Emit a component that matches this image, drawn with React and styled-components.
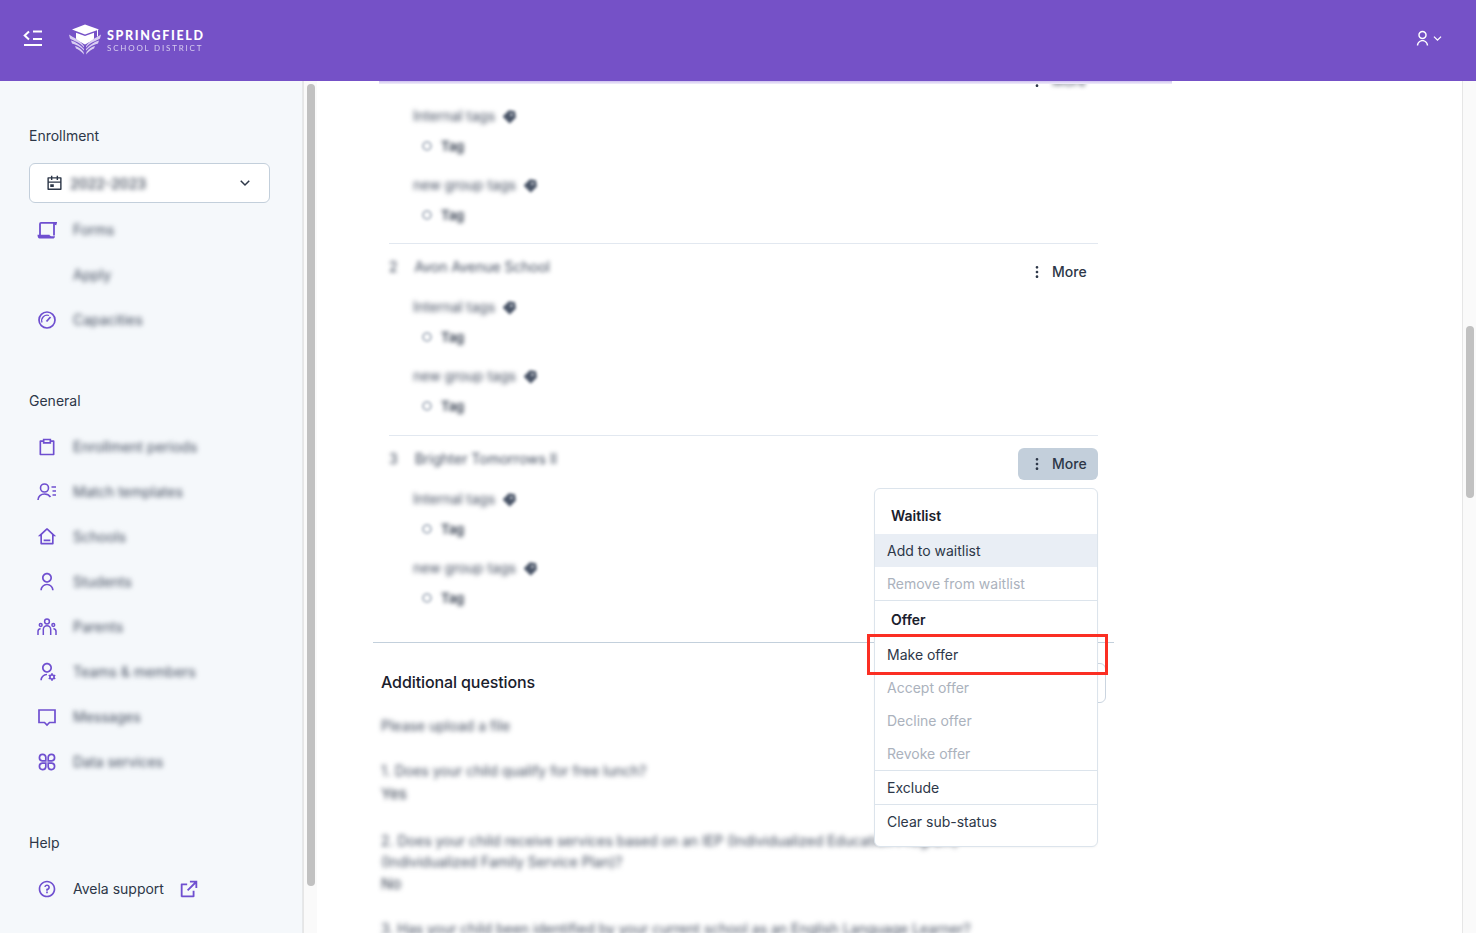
// App.jsx
import React from "react";
import styled, { createGlobalStyle } from "styled-components";
import {
  RiArrowDownSLine, RiCalendarEventLine, RiClipboardLine, RiExternalLinkLine, RiHome3Line,
  RiMore2Fill, RiPriceTag3Fill, RiQuestionLine, RiUserLine, RiUserSettingsLine,
} from "react-icons/ri";

const PURPLE = "#7551c7";
const ICON = "#6f4fd0";

// ===================== Global Styles =====================
const Global = createGlobalStyle`
  * { box-sizing: border-box; }
  html, body, #root { height: 100%; }
  body {
    margin: 0; overflow: hidden; color: #2d3748; background: #fff;
    font-family: Inter, "Liberation Sans", sans-serif; font-size: 14px;
  }
`;

// ===================== Layout =====================
const Page = styled.div`height: 100vh; display: flex; flex-direction: column;`;
const TopBar = styled.header`
  flex: 0 0 81px; position: relative; z-index: 5;
  display: flex; align-items: center; padding: 0 31px 5px 23px;
  background: ${PURPLE}; color: #fff;
`;
const Brand = styled.div`display: flex; align-items: center; gap: 6px; margin: 3px 0 0 26px;`;
const BrandText = styled.div`display: grid; gap: 2.5px; margin-top: 3px; font-family: Lato, Inter, sans-serif;`;
const BrandName = styled.span`font-size: 12.5px; line-height: 13px; font-weight: 900; letter-spacing: 1.65px;`;
const BrandSub = styled.span`font-size: 8px; line-height: 9px; letter-spacing: 1.8px; opacity: .7;`;
const UserMenu = styled.div`margin-left: auto; display: flex; align-items: center; font-size: 17px;`;
const UserChevron = styled(RiArrowDownSLine)`font-size: 15px; margin-left: -1px;`;

const Body = styled.div`flex: 1; min-height: 0; display: flex;`;
const Sidebar = styled.aside`
  flex: 0 0 303px; padding: 45px 32px 0 29px;
  background: #f5f8fb; border-right: 1px solid #e6e8ea;
`;
const SectionLabel = styled.div`
  line-height: 20px; color: #2d3748; margin-top: ${(p) => p.$top || 0}px;
`;
const SelectBox = styled.div`
  height: 40px; margin-top: 17px; display: flex; align-items: center; gap: 7px; padding: 0 15px 0 16px;
  background: #fff; border: 1px solid #c3cfdb; border-radius: 6px;
`;
const SelectChevron = styled(RiArrowDownSLine)`margin-left: auto; font-size: 18px;`;
const NavList = styled.nav`margin-top: ${(p) => p.$top}px;`;
const NavRow = styled.div`height: 45px; display: flex; align-items: center; gap: 16px; padding-left: 8px;`;
const IconSlot = styled.span`
  flex: 0 0 20px; height: 20px; display: flex; align-items: center; justify-content: center;
  font-size: 20px; color: ${ICON};
`;
const Blur = styled.span`
  filter: blur(${(p) => p.$r || 2.4}px); color: ${(p) => p.$c || "#404a5c"}; white-space: nowrap;
  font-weight: ${(p) => p.$w || 400};
`;
const SupportText = styled.span`color: #2d3748;`;
const ExternalIcon = styled.span`display: flex; font-size: 22px; color: ${ICON}; margin-left: -2px;`;

const Track = styled.div`
  flex: 0 0 14px; padding: ${(p) => p.$top}px 2px 0 3px; background: #fafafa;
  border-left: 1px solid #e6e6e6;
`;
const Thumb = styled.div`height: ${(p) => p.$h}px; border-radius: 5px; background: #c1c1c1; width: 8px;`;

const Main = styled.main`flex: 1; min-width: 0; position: relative; overflow: hidden; background: #fff;`;
const TopEdge = styled.div`
  position: absolute; top: 0; left: 62px; width: 793px; height: 3px; z-index: 2;
  background: linear-gradient(#cfc2f0, #f1edfb);
`;
const Column = styled.div`margin: -16px 0 0 56px; width: 741px;`;
const RowList = styled.div`margin-left: 16px; width: 709px;`;
const Row = styled.section`
  padding-top: ${(p) => (p.$first ? 0 : 12)}px;
  padding-bottom: ${(p) => (p.$last ? 34 : p.$first ? 18 : 19)}px;
  border-bottom: ${(p) => (p.$last ? "none" : "1px solid #e2e8f0")};
`;
const RowHead = styled.div`display: flex; justify-content: space-between; align-items: flex-start; height: 32px;`;
const RowTitle = styled.div`display: flex; gap: 17px; line-height: 22px; color: #4a5568;`;
const MoreWrap = styled.div`position: relative; width: 80px;`;
const MoreButton = styled.div`
  height: 32px; display: flex; align-items: center; gap: 7px; padding: 0 0 1px 11px; border-radius: 6px;
  font-weight: 500; color: #2d3748; font-size: 14px;
  background: ${(p) => (p.$active ? "#c3cfdb" : "transparent")};
`;
const MoreIcon = styled.span`display: flex; font-size: 16px;`;
const TagLabel = styled.div`
  height: 20px; line-height: 20px; margin: ${(p) => p.$top}px 0 0 24px; display: flex; align-items: center; gap: 7px;
`;
const TagGlyph = styled.span`display: flex; font-size: 15px; color: #4a5568; filter: blur(1.6px);`;
const TagLine = styled.div`
  height: 20px; margin: 10px 0 0 33px; display: flex; align-items: center; gap: 9px;
`;
const TagDot = styled.span`
  width: 10px; height: 10px; border-radius: 50%; border: 2px solid #b0b8c4; filter: blur(1.5px);
`;
const TagText = styled(Blur)`font-size: 13px;`;
const Divider = styled.div`height: 1px; background: #c3d0dc;`;

const Questions = styled.div`padding: 0 8px;`;
const QuestionsHead = styled.div`
  margin-top: 20px; height: 40px; display: flex; justify-content: space-between; align-items: center;
`;
const Heading = styled.h2`
  margin: 0 0 2px; font-size: 16px; line-height: 24px; font-weight: 500; color: #1a202c; letter-spacing: -.1px;
`;
const GhostButton = styled.div`width: 100px; height: 40px; border: 1px solid #cbd5e0; border-radius: 6px;`;
const Question = styled.div`margin-top: ${(p) => p.$top}px; line-height: 21px;`;
const Answer = styled.div`margin-top: ${(p) => p.$top}px; line-height: 22px; font-size: 15px;`;

// ===================== Menu =====================
const Menu = styled.div`
  position: absolute; top: 40px; right: 0; width: 224px; padding: 8px 0; z-index: 3;
  background: #fff; border: 1px solid #dce4ec; border-radius: 6px;
  box-shadow: 0 1px 2px rgba(0, 0, 0, .04);
`;
const MenuHeading = styled.div`
  height: 37px; display: flex; align-items: center; padding-left: 16px;
  font-weight: 600; color: #1a202c;
`;
const MenuItem = styled.div`
  height: 33px; display: flex; align-items: center; padding-left: 12px;
  background: ${(p) => (p.$hover ? "#e9eef5" : "transparent")};
  color: ${(p) => (p.$disabled ? "#abb2bd" : "#2d3748")};
`;
const MenuRule = styled.div`height: 1px; background: #dce4ec;`;
const Highlight = styled.div`
  position: absolute; left: -8px; top: 145px; width: 241px; height: 41px;
  border: 3px solid #fb2f23;
`;

// ===================== Icons =====================
function CollapseIcon() {
  return (
    <svg width="20" height="18" viewBox="0 0 20 18" fill="none" stroke="#fff" strokeWidth="2">
      <path d="M6 2.5 1.7 6.5 6 10.5" />
      <path d="M10 2.5h9M10 10h9M1 16h18" />
    </svg>
  );
}

function Logo() {
  return (
    <svg width="32" height="31" viewBox="0 0 32 31">
      <path fill="#fff" d="M16 .5 30 5.5 16 10.5 3 5.5z" />
      <path fill="#fff" d="M7 8.8 16 12l9-3.200v5.400c0 2-5 3.600-9 6.400-4-2.800-9-4.400-9-6.400z" />
      <path fill="none" stroke="#fff" strokeWidth="1" d="M28.500 6v6.500" />
      <path fill="#d9cef2" d="M0 10.500c5 3.500 11 5.500 15 11.500v1.500C11 18.500 5 17 1 14.500zM2 16.500c5 1.500 9 4 13 8.500v1.500c-4-4.500-8-6-12-7zM6 22c3 .5 6 2.500 8.500 6l.5 2.500C12 27 9 25 7 24.500z" />
      <path fill="#d9cef2" d="M32 10.500c-5 3.500-11 5.500-15 11.500v1.500c4-5 10-6.500 14-9zM30 16.500c-5 1.500-9 4-13 8.500v1.500c4-4.500 8-6 12-7zM26 22c-3 .5-6 2.500-8.500 6l-.5 2.500c3-3.500 6-5.500 8-6z" />
    </svg>
  );
}

function ScrollIcon() {
  return (
    <svg width="20" height="20" viewBox="0 0 20 20" fill="none" stroke={ICON} strokeWidth="1.800">
      <path d="M3 15V3.900C3 3.300 3.400 2.900 4 2.900h15l-.6 2" />
      <path d="M17 3v12.500" />
      <path fill={ICON} stroke="none" d="M.5 14.800h12c.3 1 1 1.400 1.800 1.400H18c-.2 1.600-1 2.300-2.200 2.300H2.500c-1.200 0-2-1.300-2-3.700z" />
    </svg>
  );
}

function GaugeIcon() {
  return (
    <svg width="20" height="20" viewBox="0 0 20 20" fill="none" stroke={ICON} strokeWidth="1.700">
      <circle cx="10" cy="10" r="8" />
      <path strokeWidth="1.300" d="M5 12.500a5.500 5.500 0 0 1 7-7" />
      <path strokeWidth="1.800" d="M9.500 11.500 13.500 7" />
    </svg>
  );
}

function UserListIcon() {
  return (
    <svg width="20" height="20" viewBox="0 0 20 20" fill="none" stroke={ICON} strokeWidth="1.600">
      <circle cx="7.500" cy="6" r="4" />
      <path d="M1 18c0-3.500 3-6 6.500-6s5 1.500 6 3" />
      <path d="M14.500 5h4.500M15.500 9h3.500M15.500 13h3.500" />
    </svg>
  );
}

function ParentsIcon() {
  return (
    <svg width="20" height="20" viewBox="0 0 20 20" fill="none" stroke={ICON} strokeWidth="1.500">
      <circle cx="10" cy="4.500" r="2.400" />
      <circle cx="3.700" cy="8" r="1.400" />
      <circle cx="16.300" cy="8" r="1.400" />
      <path d="M6.300 18v-5.500a3.700 3.700 0 0 1 7.400 0V18" />
      <path d="M1 18v-3.500c0-1.500 1-2.800 2.600-2.800M19 18v-3.500c0-1.500-1-2.800-2.600-2.800" />
    </svg>
  );
}

function MessageIcon() {
  return (
    <svg width="20" height="20" viewBox="0 0 20 20" fill="none" stroke={ICON} strokeWidth="1.700">
      <path d="M2 3h16v12.500h-5.500L10 18l-2.500-2.500H2z" />
    </svg>
  );
}

function PetalsIcon() {
  return (
    <svg width="20" height="20" viewBox="0 0 20 20" fill="none" stroke={ICON} strokeWidth="1.700">
      <path d="M8.800 8.800H5.200a3.200 3.200 0 1 1 3.600-3.600z" />
      <path d="M11.200 8.800h3.600a3.200 3.200 0 1 0-3.600-3.600z" />
      <path d="M8.800 11.200H5.200a3.200 3.200 0 1 0 3.600 3.600z" />
      <path d="M11.200 11.200h3.600a3.200 3.200 0 1 1-3.600 3.600z" />
    </svg>
  );
}

const GENERAL = [
  [<RiClipboardLine />, "Enrollment periods"],
  [<UserListIcon />, "Match templates"],
  [<RiHome3Line />, "Schools"],
  [<RiUserLine />, "Students"],
  [<ParentsIcon />, "Parents"],
  [<RiUserSettingsLine />, "Teams & members"],
  [<MessageIcon />, "Messages"],
  [<PetalsIcon />, "Data services"],
];

function NavItem({ icon, label }) {
  return (
    <NavRow>
      <IconSlot>{icon}</IconSlot>
      <Blur>{label}</Blur>
    </NavRow>
  );
}

function TagBlock() {
  return (
    <>
      <TagLabel $top={9}><Blur>Internal tags</Blur><TagGlyph><RiPriceTag3Fill /></TagGlyph></TagLabel>
      <TagLine><TagDot /><TagText $c="#2d3748" $w={600} $r={2}>Tag</TagText></TagLine>
      <TagLabel $top={19}><Blur>new group tags</Blur><TagGlyph><RiPriceTag3Fill /></TagGlyph></TagLabel>
      <TagLine><TagDot /><TagText $c="#2d3748" $w={600} $r={2}>Tag</TagText></TagLine>
    </>
  );
}

function MoreMenu() {
  return (
    <Menu>
      <MenuHeading>Waitlist</MenuHeading>
      <MenuItem $hover>Add to waitlist</MenuItem>
      <MenuItem $disabled>Remove from waitlist</MenuItem>
      <MenuRule />
      <MenuHeading>Offer</MenuHeading>
      <MenuItem>Make offer</MenuItem>
      <MenuItem $disabled>Accept offer</MenuItem>
      <MenuItem $disabled>Decline offer</MenuItem>
      <MenuItem $disabled>Revoke offer</MenuItem>
      <MenuRule />
      <MenuItem>Exclude</MenuItem>
      <MenuRule />
      <MenuItem>Clear sub-status</MenuItem>
      <Highlight />
    </Menu>
  );
}

function SchoolRow({ first, last, num, name, active }) {
  return (
    <Row $first={first} $last={last}>
      <RowHead>
        <RowTitle>
          {num && <Blur $r={2}>{num}</Blur>}
          {name && <Blur $r={2}>{name}</Blur>}
        </RowTitle>
        <MoreWrap>
          <MoreButton $active={active}>
            <MoreIcon><RiMore2Fill /></MoreIcon>
            {first ? <Blur $c="#2d3748" $r={2}>More</Blur> : "More"}
          </MoreButton>
          {active && <MoreMenu />}
        </MoreWrap>
      </RowHead>
      <TagBlock />
    </Row>
  );
}

// ===================== App =====================
export default function App() {
  return (
    <Page>
      <Global />
      <TopBar>
        <CollapseIcon />
        <Brand>
          <Logo />
          <BrandText>
            <BrandName>SPRINGFIELD</BrandName>
            <BrandSub>SCHOOL DISTRICT</BrandSub>
          </BrandText>
        </Brand>
        <UserMenu><RiUserLine /><UserChevron /></UserMenu>
      </TopBar>

      <Body>
        <Sidebar>
          <SectionLabel>Enrollment</SectionLabel>
          <SelectBox>
            <RiCalendarEventLine size={17} color="#2d3748" />
            <Blur $c="#2d3748" $w={500}>2022-2023</Blur>
            <SelectChevron />
          </SelectBox>
          <NavList $top={4}>
            <NavItem icon={<ScrollIcon />} label="Forms" />
            <NavItem label="Apply" />
            <NavItem icon={<GaugeIcon />} label="Capacities" />
          </NavList>
          <SectionLabel $top={49}>General</SectionLabel>
          <NavList $top={13}>
            {GENERAL.map(([icon, label]) => <NavItem key={label} icon={icon} label={label} />)}
          </NavList>
          <SectionLabel $top={49}>Help</SectionLabel>
          <NavList $top={13}>
            <NavRow>
              <IconSlot><RiQuestionLine /></IconSlot>
              <SupportText>Avela support</SupportText>
              <ExternalIcon><RiExternalLinkLine /></ExternalIcon>
            </NavRow>
          </NavList>
        </Sidebar>
        <Track $top={3}><Thumb $h={802} /></Track>

        <Main>
          <TopEdge />
          <Column>
            <RowList>
              <SchoolRow first />
              <SchoolRow num="2" name="Avon Avenue School" />
              <SchoolRow last active num="3" name="Brighter Tomorrows II" />
            </RowList>
            <Divider />
            <Questions>
              <QuestionsHead>
                <Heading>Additional questions</Heading>
                <GhostButton />
              </QuestionsHead>
              <Question $top={12}><Blur>Please upload a file</Blur></Question>
              <Question $top={24}><Blur>1. Does your child qualify for free lunch?</Blur></Question>
              <Answer $top={2}><Blur $c="#2d3748">Yes</Blur></Answer>
              <Question $top={25}>
                <Blur>2. Does your child receive services based on an IEP (Individualized Education Program)</Blur>
                <br />
                <Blur>(Individualized Family Service Plan)?</Blur>
              </Question>
              <Answer $top={1}><Blur $c="#2d3748">No</Blur></Answer>
              <Question $top={23}><Blur>3. Has your child been identified by your current school as an English Language Learner?</Blur></Question>
            </Questions>
          </Column>
        </Main>
        <Track $top={245}><Thumb $h={172} /></Track>
      </Body>
    </Page>
  );
}
